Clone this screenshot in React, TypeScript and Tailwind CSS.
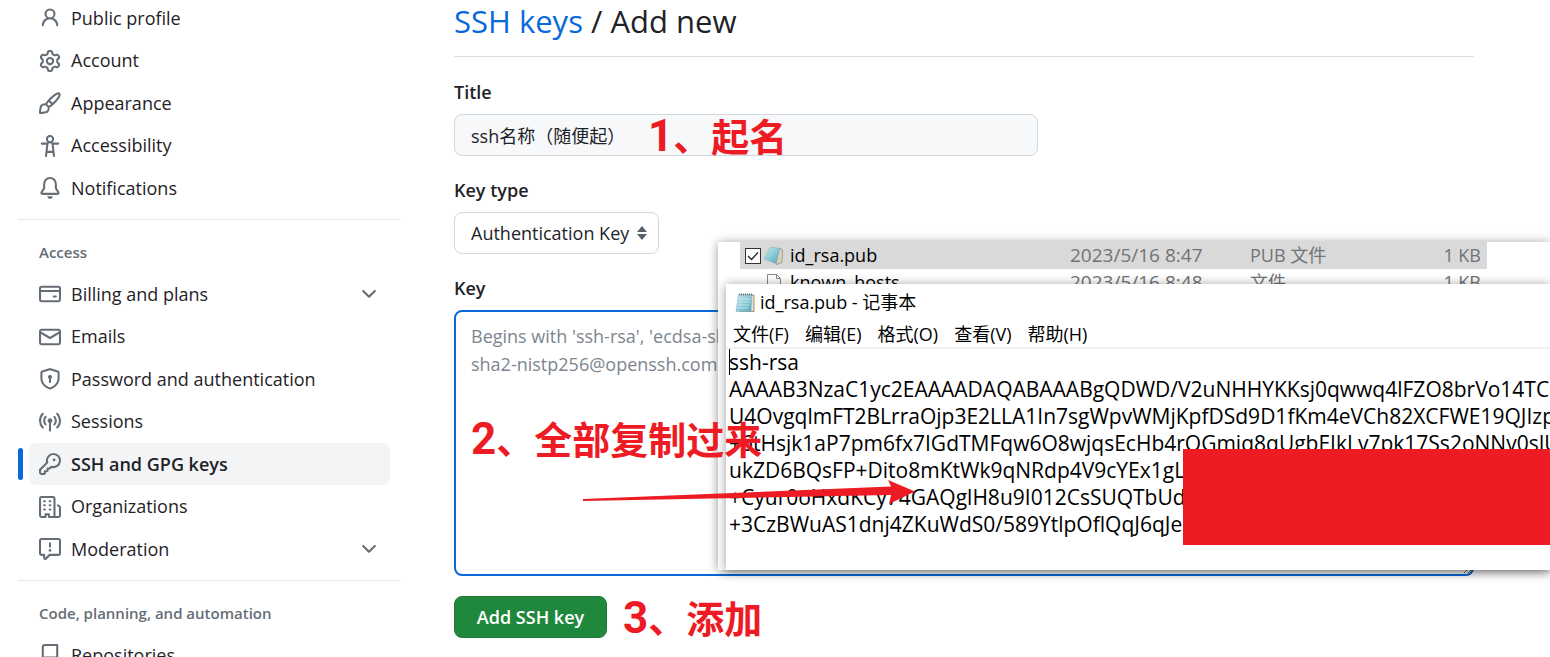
import type { ReactNode } from 'react';

const ICONS = {
  person:
    'M10.561 8.073a6.005 6.005 0 0 1 3.432 5.142.75.75 0 1 1-1.498.07 4.5 4.5 0 0 0-8.99 0 .75.75 0 0 1-1.498-.07 6.004 6.004 0 0 1 3.431-5.142 3.999 3.999 0 1 1 5.123 0ZM10.5 5a2.5 2.5 0 1 0-5 0 2.5 2.5 0 0 0 5 0Z',
  gear:
    'M8 0a8.2 8.2 0 0 1 .701.031C9.444.095 9.99.645 10.16 1.29l.288 1.107c.018.066.079.158.212.224.231.114.454.243.668.386.123.082.233.09.299.071l1.103-.303c.644-.176 1.392.021 1.82.63.27.385.506.792.704 1.218.315.675.111 1.422-.364 1.891l-.814.806c-.049.048-.098.147-.088.294.016.257.016.515 0 .772-.01.147.038.246.088.294l.814.806c.475.469.679 1.216.364 1.891a7.977 7.977 0 0 1-.704 1.217c-.428.61-1.176.807-1.82.63l-1.102-.302c-.067-.019-.177-.011-.3.071a5.909 5.909 0 0 1-.668.386c-.133.066-.194.158-.211.224l-.29 1.106c-.168.646-.715 1.196-1.458 1.26a8.006 8.006 0 0 1-1.402 0c-.743-.064-1.289-.614-1.458-1.26l-.289-1.106c-.018-.066-.079-.158-.212-.224a5.738 5.738 0 0 1-.668-.386c-.123-.082-.233-.09-.299-.071l-1.103.303c-.644.176-1.392-.021-1.82-.63a8.12 8.12 0 0 1-.704-1.218c-.315-.675-.111-1.422.363-1.891l.815-.806c.05-.048.098-.147.088-.294a6.214 6.214 0 0 1 0-.772c.01-.147-.038-.246-.088-.294l-.815-.806C.635 6.045.431 5.298.746 4.623a7.92 7.92 0 0 1 .704-1.217c.428-.61 1.176-.807 1.82-.63l1.102.302c.067.019.177.011.3-.071.214-.143.437-.272.668-.386.133-.066.194-.158.211-.224l.29-1.106C6.009.645 6.556.095 7.299.03 7.53.01 7.764 0 8 0Zm-.571 1.525c-.036.003-.108.036-.137.146l-.289 1.105c-.147.561-.549.967-.998 1.189-.173.086-.34.183-.5.29-.417.278-.97.423-1.529.27l-1.103-.303c-.109-.03-.175.016-.195.045-.22.312-.412.644-.573.99-.014.031-.021.11.059.19l.815.806c.411.406.562.957.53 1.456a4.709 4.709 0 0 0 0 .582c.032.499-.119 1.05-.53 1.456l-.815.806c-.081.08-.073.159-.059.19.162.346.353.677.573.989.02.03.085.076.195.046l1.102-.303c.56-.153 1.113-.008 1.53.27.161.107.328.204.501.29.447.222.85.629.997 1.189l.289 1.105c.029.109.101.143.137.146a6.6 6.6 0 0 0 1.142 0c.036-.003.108-.036.137-.146l.289-1.105c.147-.561.549-.967.998-1.189.173-.086.34-.183.5-.29.417-.278.97-.423 1.529-.27l1.103.303c.109.029.175-.016.195-.045.22-.313.411-.644.573-.99.014-.031.021-.11-.059-.19l-.815-.806c-.411-.406-.562-.957-.53-1.456a4.709 4.709 0 0 0 0-.582c-.032-.499.119-1.05.53-1.456l.815-.806c.081-.08.073-.159.059-.19a6.464 6.464 0 0 0-.573-.989c-.02-.03-.085-.076-.195-.046l-1.102.303c-.56.153-1.113.008-1.53-.27a4.44 4.44 0 0 0-.501-.29c-.447-.222-.85-.629-.997-1.189l-.289-1.105c-.029-.11-.101-.143-.137-.146a6.6 6.6 0 0 0-1.142 0ZM11 8a3 3 0 1 1-6 0 3 3 0 0 1 6 0ZM9.5 8a1.5 1.5 0 1 0-3.001.001A1.5 1.5 0 0 0 9.5 8Z',
  paintbrush:
    'M11.134 1.535c.7-.509 1.416-.942 2.076-1.155.649-.21 1.463-.267 2.069.34.603.601.568 1.411.368 2.07-.202.668-.624 1.39-1.125 2.096-1.011 1.424-2.496 2.987-3.775 4.249-1.098 1.084-2.132 1.839-3.04 2.3a3.744 3.744 0 0 1-1.055 3.217c-.431.431-1.065.691-1.657.861-.614.177-1.294.287-1.914.357A21.151 21.151 0 0 1 .797 16H.743A.75.75 0 0 1 0 15.257v-.054a21.25 21.25 0 0 1 .13-2.284c.067-.647.187-1.287.358-1.914.17-.591.43-1.226.86-1.657a3.746 3.746 0 0 1 3.227-1.054c.466-.893 1.225-1.907 2.314-2.982 1.271-1.255 2.833-2.75 4.245-3.777ZM1.62 13.089c-.051.464-.086.929-.104 1.395.466-.018.932-.053 1.396-.104a10.511 10.511 0 0 0 1.668-.309c.526-.151.856-.325 1.011-.48a2.25 2.25 0 1 0-3.182-3.182c-.155.155-.329.485-.48 1.01a10.515 10.515 0 0 0-.309 1.67Zm10.396-10.34c-1.224.89-2.605 2.189-3.822 3.384l1.718 1.718c1.21-1.205 2.51-2.597 3.387-3.833.47-.662.78-1.227.912-1.662.134-.444.032-.551.009-.575h-.001V1.78c-.014-.014-.113-.113-.548.027-.432.14-.995.462-1.655.942Zm-4.832 7.266-.001.001a9.859 9.859 0 0 0 1.63-1.142L7.155 7.216a9.7 9.7 0 0 0-1.161 1.607c.482.302.889.71 1.19 1.192Z',
  accessibility:
    'M9.923 5.302c.063.063.122.129.178.198H14A.75.75 0 0 1 14 7h-3.3l.578 5.163.362 2.997a.75.75 0 0 1-1.49.18L9.868 13H6.132l-.282 2.34a.75.75 0 0 1-1.49-.18l.362-2.997L5.3 7H2a.75.75 0 0 1 0-1.5h3.9a2.54 2.54 0 0 1 .176-.198 3 3 0 1 1 3.847 0ZM9.2 7.073h-.001a1.206 1.206 0 0 0-2.398 0L6.305 11.5h3.39ZM9.5 3a1.5 1.5 0 1 0-3.001.001A1.5 1.5 0 0 0 9.5 3Z',
  bell:
    'M8 16a2 2 0 0 0 1.985-1.75c.017-.137-.097-.25-.235-.25h-3.5c-.138 0-.252.113-.235.25A2 2 0 0 0 8 16ZM3 5a5 5 0 0 1 10 0v2.947c0 .05.015.098.042.139l1.703 2.555A1.519 1.519 0 0 1 13.482 13H2.518a1.516 1.516 0 0 1-1.263-2.36l1.703-2.554A.255.255 0 0 0 3 7.947Zm5-3.5A3.5 3.5 0 0 0 4.5 5v2.947c0 .346-.102.683-.294.97l-1.703 2.556a.017.017 0 0 0-.003.01l.001.006c0 .002.002.004.004.006l.006.004.007.001h10.964l.007-.001.006-.004.004-.006.001-.007a.017.017 0 0 0-.003-.01l-1.703-2.554a1.745 1.745 0 0 1-.294-.97V5A3.5 3.5 0 0 0 8 1.5Z',
  card:
    'M10.75 9a.75.75 0 0 0 0 1.5h1.5a.75.75 0 0 0 0-1.5h-1.5ZM0 3.75C0 2.784.784 2 1.75 2h12.5c.966 0 1.75.784 1.75 1.75v8.5A1.75 1.75 0 0 1 14.25 14H1.75A1.75 1.75 0 0 1 0 12.25ZM14.5 6.5h-13v5.75c0 .138.112.25.25.25h12.5a.25.25 0 0 0 .25-.25Zm0-2.75a.25.25 0 0 0-.25-.25H1.75a.25.25 0 0 0-.25.25V5h13Z',
  mail:
    'M1.75 2h12.5c.966 0 1.75.784 1.75 1.75v8.5A1.75 1.75 0 0 1 14.25 14H1.75A1.75 1.75 0 0 1 0 12.25v-8.5C0 2.784.784 2 1.75 2ZM1.5 12.251c0 .138.112.25.25.25h12.5a.25.25 0 0 0 .25-.25V5.809L8.38 9.397a.75.75 0 0 1-.76 0L1.5 5.809v6.442Zm13-8.181v-.32a.25.25 0 0 0-.25-.25H1.75a.25.25 0 0 0-.25.25v.32L8 7.88Z',
  shield:
    'm8.533.133 5.25 1.68A1.75 1.75 0 0 1 15 3.48V7c0 1.566-.32 3.182-1.303 4.682-.983 1.498-2.585 2.813-5.032 3.855a1.697 1.697 0 0 1-1.33 0c-2.447-1.042-4.049-2.357-5.032-3.855C1.32 10.182 1 8.566 1 7V3.48a1.755 1.755 0 0 1 1.217-1.667l5.25-1.68a1.748 1.748 0 0 1 1.066 0Zm-.61 1.429.001.001-5.25 1.68a.251.251 0 0 0-.174.237V7c0 1.36.275 2.666 1.057 3.859.784 1.194 2.121 2.342 4.366 3.298a.196.196 0 0 0 .154 0c2.245-.957 3.582-2.103 4.366-3.297C13.225 9.666 13.5 8.358 13.5 7V3.48a.25.25 0 0 0-.174-.238l-5.25-1.68a.25.25 0 0 0-.153 0ZM9.5 6.5c0 .536-.286 1.032-.75 1.3v2.45a.75.75 0 0 1-1.5 0V7.8A1.5 1.5 0 1 1 9.5 6.5Z',
  broadcast:
    'M8.75 8.582v5.668a.75.75 0 0 1-1.5 0V8.582a1.75 1.75 0 1 1 1.5 0Zm3.983-7.125a.75.75 0 0 1 1.06.026A7.976 7.976 0 0 1 16 7c0 2.139-.84 4.083-2.207 5.517a.75.75 0 1 1-1.086-1.034A6.474 6.474 0 0 0 14.5 7a6.474 6.474 0 0 0-1.793-4.483.75.75 0 0 1 .026-1.06Zm-9.466 0c.3.286.312.76.026 1.06A6.474 6.474 0 0 0 1.5 7a6.47 6.47 0 0 0 1.793 4.483.75.75 0 0 1-1.086 1.034A7.973 7.973 0 0 1 0 7c0-2.139.84-4.083 2.207-5.517a.75.75 0 0 1 1.06-.026Zm8.556 2.321A4.988 4.988 0 0 1 13 7a4.988 4.988 0 0 1-1.177 3.222.75.75 0 1 1-1.146-.967A3.487 3.487 0 0 0 11.5 7c0-.86-.309-1.645-.823-2.255a.75.75 0 0 1 1.146-.967Zm-6.492.958A3.48 3.48 0 0 0 4.5 7a3.48 3.48 0 0 0 .823 2.255.75.75 0 0 1-1.146.967A4.981 4.981 0 0 1 3 7a4.982 4.982 0 0 1 1.188-3.236.75.75 0 1 1 1.143.972Z',
  key:
    'M10.5 0a5.499 5.499 0 1 1-1.288 10.848l-.932.932a.749.749 0 0 1-.53.22H7v.75a.749.749 0 0 1-.22.53l-.5.5a.749.749 0 0 1-.53.22H5v.75a.749.749 0 0 1-.22.53l-.5.5a.749.749 0 0 1-.53.22h-2A1.75 1.75 0 0 1 0 14.25v-2c0-.199.079-.389.22-.53l4.932-4.932A5.5 5.5 0 0 1 10.5 0Zm-4 5.5c-.001.431.069.86.205 1.269a.75.75 0 0 1-.181.768L1.5 12.56v1.69c0 .138.112.25.25.25h1.69l.06-.06v-1.19a.75.75 0 0 1 .75-.75h1.19l.06-.06v-1.19a.75.75 0 0 1 .75-.75h1.19l1.023-1.025a.75.75 0 0 1 .768-.18A4 4 0 1 0 6.5 5.5ZM11 6a1 1 0 1 1 0-2 1 1 0 0 1 0 2Z',
  organization:
    'M1.75 16A1.75 1.75 0 0 1 0 14.25V1.75C0 .784.784 0 1.75 0h8.5C11.216 0 12 .784 12 1.75v12.5c0 .085-.006.168-.018.25h2.268a.25.25 0 0 0 .25-.25V8.285a.25.25 0 0 0-.111-.208l-1.055-.703a.749.749 0 1 1 .832-1.248l1.055.703c.487.325.779.871.779 1.456v5.965A1.75 1.75 0 0 1 14.25 16h-3.5a.766.766 0 0 1-.197-.026c-.099.017-.2.026-.303.026h-3a.75.75 0 0 1-.75-.75V14h-1v1.25a.75.75 0 0 1-.75.75Zm-.25-1.75c0 .138.112.25.25.25H4v-1.25a.75.75 0 0 1 .75-.75h2.5a.75.75 0 0 1 .75.75v1.25h2.25a.25.25 0 0 0 .25-.25V1.75a.25.25 0 0 0-.25-.25h-8.5a.25.25 0 0 0-.25.25ZM3.75 6h.5a.75.75 0 0 1 0 1.5h-.5a.75.75 0 0 1 0-1.5ZM3 3.75A.75.75 0 0 1 3.75 3h.5a.75.75 0 0 1 0 1.5h-.5A.75.75 0 0 1 3 3.75Zm4 3A.75.75 0 0 1 7.75 6h.5a.75.75 0 0 1 0 1.5h-.5A.75.75 0 0 1 7 6.75ZM7.75 3h.5a.75.75 0 0 1 0 1.5h-.5a.75.75 0 0 1 0-1.5ZM3 9.75A.75.75 0 0 1 3.75 9h.5a.75.75 0 0 1 0 1.5h-.5A.75.75 0 0 1 3 9.75ZM7.75 9h.5a.75.75 0 0 1 0 1.5h-.5a.75.75 0 0 1 0-1.5Z',
  report:
    'M0 1.75C0 .784.784 0 1.75 0h12.5C15.216 0 16 .784 16 1.75v9.5A1.75 1.75 0 0 1 14.25 13H8.06l-2.573 2.573A1.458 1.458 0 0 1 3 14.543V13H1.75A1.75 1.75 0 0 1 0 11.25Zm1.75-.25a.25.25 0 0 0-.25.25v9.5c0 .138.112.25.25.25h2a.75.75 0 0 1 .75.75v2.19l2.72-2.72a.749.749 0 0 1 .53-.22h6.5a.25.25 0 0 0 .25-.25v-9.5a.25.25 0 0 0-.25-.25Zm7 2.25v2.5a.75.75 0 0 1-1.5 0v-2.5a.75.75 0 0 1 1.5 0ZM9 9a1 1 0 1 1-2 0 1 1 0 0 1 2 0Z',
  repo:
    'M2 2.5A2.5 2.5 0 0 1 4.5 0h8.75a.75.75 0 0 1 .75.75v12.5a.75.75 0 0 1-.75.75h-2.5a.75.75 0 0 1 0-1.5h1.75v-2h-8a1 1 0 0 0-.714 1.7.75.75 0 1 1-1.072 1.05A2.495 2.495 0 0 1 2 11.5Zm10.5-1h-8a1 1 0 0 0-1 1v6.708A2.486 2.486 0 0 1 4.5 9h8ZM5 12.25a.25.25 0 0 1 .25-.25h3.5a.25.25 0 0 1 .25.25v3.25a.25.25 0 0 1-.4.2l-1.45-1.087a.249.249 0 0 0-.3 0L5.4 15.7a.25.25 0 0 1-.4-.2Z',
  chevron:
    'M12.78 5.22a.749.749 0 0 1 0 1.06l-4.25 4.25a.749.749 0 0 1-1.06 0L3.22 6.28a.749.749 0 1 1 1.06-1.06L8 8.939l3.72-3.719a.749.749 0 0 1 1.06 0Z',
};

type NavEntry = {
  icon: keyof typeof ICONS;
  label: string;
  expandable?: boolean;
  active?: boolean;
};

const ACCOUNT_ITEMS: NavEntry[] = [
  { icon: 'person', label: 'Public profile' },
  { icon: 'gear', label: 'Account' },
  { icon: 'paintbrush', label: 'Appearance' },
  { icon: 'accessibility', label: 'Accessibility' },
  { icon: 'bell', label: 'Notifications' },
];

const ACCESS_ITEMS: NavEntry[] = [
  { icon: 'card', label: 'Billing and plans', expandable: true },
  { icon: 'mail', label: 'Emails' },
  { icon: 'shield', label: 'Password and authentication' },
  { icon: 'broadcast', label: 'Sessions' },
  { icon: 'key', label: 'SSH and GPG keys', active: true },
  { icon: 'organization', label: 'Organizations' },
  { icon: 'report', label: 'Moderation', expandable: true },
];

const CODE_ITEMS: NavEntry[] = [{ icon: 'repo', label: 'Repositories' }];

const MENUS = ['文件(F)', '编辑(E)', '格式(O)', '查看(V)', '帮助(H)'];

const KEY_TEXT = [
  'ssh-rsa',
  'AAAAB3NzaC1yc2EAAAADAQABAAABgQDWD/V2uNHHYKKsj0qwwq4lFZO8brVo14TC',
  'U4OvgqlmFT2BLrraOjp3E2LLA1In7sgWpvWMjKpfDSd9D1fKm4eVCh82XCFWE19QJIzp',
  '+6tHsjk1aP7pm6fx7IGdTMFqw6O8wjqsEcHb4rOGmiq8qUgbEIkLv7pk17Ss2oNNv0sJU',
  'ukZD6BQsFP+Dito8mKtWk9qNRdp4V9cYEx1gL',
  '+Cyur0oHxdKCy74GAQglH8u9I012CsSUQTbUd',
  '+3CzBWuAS1dnj4ZKuWdS0/589YtlpOflQqJ6qJe',
].join('\n');

const KEY_HINT =
  "Begins with 'ssh-rsa', 'ecdsa-sha2-nistp256', 'ecdsa-sha2-nistp384', 'ecdsa-sha2-nistp521', 'ssh-ed25519', 'sk-ecdsa-\nsha2-nistp256@openssh.com', or 'sk-ssh-ed25519@openssh.com'";

function Icon({ name }: { name: keyof typeof ICONS }) {
  return (
    <svg viewBox="0 0 16 16" className="size-[22px] shrink-0 fill-[#656d76]" aria-hidden="true">
      <path fillRule="evenodd" d={ICONS[name]} />
    </svg>
  );
}

function NavGroup({ title, items }: { title?: string; items: NavEntry[] }) {
  return (
    <section>
      {title && (
        <h3 className="flex h-[43px] items-center pl-[21px] text-[15px] leading-6 font-semibold text-[#656d76]">
          {title}
        </h3>
      )}
      <ul>
        {items.map((item) => (
          <li key={item.label} className="flex h-[42px] items-center even:h-[43px]">
            <span
              className={item.active ? 'h-8 w-[5px] rounded-md bg-[#0969da]' : 'h-8 w-[5px]'}
            />
            <a
              href="#"
              className={
                item.active
                  ? 'mr-[11px] ml-1.5 flex h-full flex-1 items-center gap-2.5 rounded-lg bg-[#f3f4f6] px-2.5 font-semibold'
                  : 'mr-[11px] ml-1.5 flex h-full flex-1 items-center gap-2.5 rounded-lg px-2.5'
              }
            >
              <Icon name={item.icon} />
              <span className="flex-1">{item.label}</span>
              {item.expandable && <Icon name="chevron" />}
            </a>
          </li>
        ))}
      </ul>
    </section>
  );
}

function Sidebar() {
  return (
    <nav className="-mt-[3px] w-[383px] shrink-0">
      <NavGroup items={ACCOUNT_ITEMS} />
      <hr className="my-2.5 border-[#e5e8eb]" />
      <NavGroup title="Access" items={ACCESS_ITEMS} />
      <hr className="my-2.5 border-[#e5e8eb]" />
      <NavGroup title="Code, planning, and automation" items={CODE_ITEMS} />
    </nav>
  );
}

function KeyForm() {
  return (
    <main className="flex-1">
      <h1 className="border-b border-[#d8dee4] pt-px pb-[15px] text-[31px] leading-10">
        <a href="#" className="text-[#0969da]">
          SSH keys
        </a>{' '}
        / Add new
      </h1>
      <form className="flex flex-col items-start pt-[21px]">
        <label htmlFor="title" className="leading-7 font-semibold">
          Title
        </label>
        <input
          id="title"
          defaultValue="ssh名称（随便起）"
          className="mt-2 h-[42px] w-[584px] max-w-full rounded-lg border border-[#d0d7de] bg-[#f6f8fa] px-4 outline-none"
        />
        <label htmlFor="key-type" className="mt-5 leading-7 font-semibold">
          Key type
        </label>
        <div className="relative mt-2">
          <select
            id="key-type"
            className="h-[42px] w-[205px] appearance-none rounded-lg border border-[#d0d7de] bg-white pl-4 outline-none"
          >
            <option>Authentication Key</option>
          </select>
          <svg
            viewBox="0 0 12 16"
            className="pointer-events-none absolute top-[13px] right-[11px] h-4 w-3 fill-[#57606a]"
            aria-hidden="true"
          >
            <path d="M1 7 6 1l5 6ZM1 9l5 6 5-6Z" />
          </svg>
        </div>
        <label htmlFor="key" className="mt-5 leading-7 font-semibold">
          Key
        </label>
        <textarea
          id="key"
          placeholder={KEY_HINT}
          className="mt-2 h-[266px] w-full rounded-lg border-2 border-[#0969da] px-[15px] py-2.5 leading-7 outline-none placeholder:text-[#7d858e]"
        />
        <button
          type="button"
          className="mt-5 h-[42px] w-[153px] rounded-lg border border-[#1f7a39] bg-[#1f883d] font-semibold text-white"
        >
          Add SSH key
        </button>
      </form>
    </main>
  );
}

function NotepadIcon({ tilted }: { tilted?: boolean }) {
  return (
    <svg viewBox="0 0 20 20" className="size-5 shrink-0" aria-hidden="true">
      <defs>
        <linearGradient id="pad" x1="0" y1="0" x2="1" y2="1">
          <stop offset="0" stopColor="#c9ecf2" />
          <stop offset="1" stopColor="#4fa9bd" />
        </linearGradient>
      </defs>
      {tilted ? (
        <>
          <path d="M15 2 18.500 3.500 18 16.500 12 18.500Z" fill="#d9d2bd" stroke="#8c8674" strokeWidth=".7" />
          <path d="M6.500 1 16 2.500 11.500 17.500 0 13Z" fill="url(#pad)" stroke="#7fa9b3" strokeWidth=".5" />
        </>
      ) : (
        <>
          <path d="M4.500 2H19v16.500H5Z" fill="#e8e2cd" stroke="#8d7b52" strokeWidth=".8" />
          <path d="M3.500 1.500H17L16 18.500H1Z" fill="url(#pad)" stroke="#8ab7c1" strokeWidth=".5" />
          <path d="M4 6h11M3.500 9h11M3 12h11M2.500 15h11" stroke="#eefafc" strokeWidth=".6" />
          <path d="M4 1.500h14" stroke="#66777b" strokeWidth="2" strokeDasharray="1 1" />
        </>
      )}
    </svg>
  );
}

function FileRow({
  name,
  date,
  type,
  checked,
  icon,
}: {
  name: string;
  date: string;
  type: string;
  checked?: boolean;
  icon: ReactNode;
}) {
  return (
    <tr className={checked ? 'h-[27px] bg-[#d9d9d9] text-[#737373]' : 'h-[27px] text-[#737373]'}>
      <td className="w-[330px] p-0">
        <span className="flex items-center gap-[3px] pl-[5px]">
          {checked ? (
            <span className="relative flex size-4">
              <input
                type="checkbox"
                aria-label={name}
                defaultChecked
                className="size-4 appearance-none border border-[#333] bg-white"
              />
              <svg
                viewBox="0 0 16 16"
                className="pointer-events-none absolute inset-0 fill-none stroke-[#222]"
                aria-hidden="true"
              >
                <path d="m3 8 3.500 3.500L13 4.500" strokeWidth="1.300" />
              </svg>
            </span>
          ) : (
            <span className="size-4" />
          )}
          {icon}
          <span className="ml-[3px] text-[18px] text-black">{name}</span>
        </span>
      </td>
      <td className="w-[180px] p-0 text-[19px]">{date}</td>
      <td className="p-0">{type}</td>
      <td className="p-0 pr-1.5 text-right">1 KB</td>
    </tr>
  );
}

function ExplorerWindow() {
  return (
    <div className="absolute top-[242px] right-0 left-[718px] h-[328px] bg-white pl-[22px] shadow-[0_1px_10px_rgba(0,0,0,0.4)]">
      <table className="w-[747px] border-collapse text-[18px] leading-[27px]">
        <tbody>
          <FileRow
            name="id_rsa.pub"
            date="2023/5/16 8:47"
            type="PUB 文件"
            checked
            icon={<NotepadIcon tilted />}
          />
          <FileRow
            name="known_hosts"
            date="2023/5/16 8:48"
            type="文件"
            icon={
              <svg viewBox="0 0 20 20" className="size-5 shrink-0" aria-hidden="true">
                <path d="M3.500 1.500h9l4 4v13h-13ZM12.500 1.500v4h4" fill="#fff" stroke="#888" />
              </svg>
            }
          />
        </tbody>
      </table>
    </div>
  );
}

function NotepadWindow() {
  return (
    <div className="absolute top-[284px] right-0 left-[726px] flex h-[286px] flex-col bg-white text-[18px] text-black shadow-[0_1px_10px_rgba(0,0,0,0.4)]">
      <div className="flex h-[37px] items-center gap-[5px] pl-[9px]">
        <NotepadIcon />
        <span>id_rsa.pub - 记事本</span>
      </div>
      <div className="flex h-7 items-center gap-4 border-b-2 border-[#f0f0f0] pl-[7px]">
        {MENUS.map((menu) => (
          <button key={menu} type="button">
            {menu}
          </button>
        ))}
      </div>
      <div className="relative flex-1">
        <textarea
          aria-label="id_rsa.pub"
          readOnly
          wrap="off"
          value={KEY_TEXT}
          className="size-full resize-none overflow-hidden pl-[3px] text-[21px] leading-[27px] outline-none"
        />
        <span className="absolute top-0 left-[3px] h-[26px] w-px bg-black" />
        <span className="absolute top-[100px] right-0 left-[457px] h-24 bg-[#ed1c24]" />
      </div>
    </div>
  );
}

function Note({ step, text, place }: { step: string; text: string; place: string }) {
  return (
    <p
      className={`${place} absolute flex text-[38px] leading-[44px] font-bold whitespace-nowrap text-[#ed1c24]`}
    >
      <span className="font-['Roboto',sans-serif] text-[44px]">{step}</span>
      <span>、{text}</span>
    </p>
  );
}

export default function App() {
  return (
    <div className="relative h-screen overflow-hidden bg-white font-['Open_Sans','Noto_Sans_CJK_SC',sans-serif] text-[18px] text-[#1f2328]">
      <div className="flex gap-[53px] pr-[76px] pl-[18px]">
        <Sidebar />
        <KeyForm />
      </div>
      <ExplorerWindow />
      <NotepadWindow />
      <Note step="1" text="起名" place="top-[114px] left-[648px]" />
      <Note step="2" text="全部复制过来" place="top-[417px] left-[471px]" />
      <Note step="3" text="添加" place="top-[596px] left-[623px]" />
      <svg
        viewBox="0 0 332 24"
        className="absolute top-[480px] left-[583px] h-6 w-[332px] fill-[#ed1c24]"
        aria-hidden="true"
      >
        <path d="M0 19 308 6.500 305 0l27 11.500L306 24l2-9L0 21Z" />
      </svg>
    </div>
  );
}
